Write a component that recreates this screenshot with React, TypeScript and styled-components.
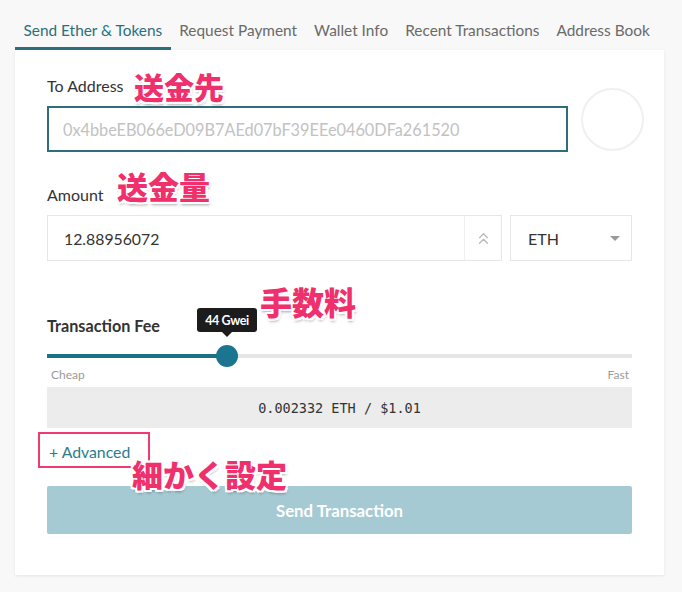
import styled, { createGlobalStyle } from "styled-components";
import { ChevronsUp } from "lucide-react";

const GlobalStyle = createGlobalStyle`
  html, body {
    margin: 0;
    padding: 0;
    background: #f8f8f8;
    font-family: Lato, "Open Sans", sans-serif;
  }
  * {
    box-sizing: border-box;
  }
`;

const tabs = [
  "Send Ether & Tokens",
  "Request Payment",
  "Wallet Info",
  "Recent Transactions",
  "Address Book",
];

const feePercent = 30.77;

function App() {
  return (
    <Page>
      <GlobalStyle />
      <TabBar>
        {tabs.map((t, i) => (
          <Tab key={t} $active={i === 0}>
            {t}
          </Tab>
        ))}
      </TabBar>
      <Card>
        <AddressRow>
          <AddressColumn>
            <Label>To Address</Label>
            <AddressInput placeholder="0x4bbeEB066eD09B7AEd07bF39EEe0460DFa261520" />
          </AddressColumn>
          <Identicon />
        </AddressRow>

        <Label $top={33}>Amount</Label>
        <AmountRow>
          <AmountBox>
            <AmountValue>12.88956072</AmountValue>
            <Spinner>
              <ChevronsUp size={19} strokeWidth={1.5} color="#b8b8b8" />
            </Spinner>
          </AmountBox>
          <SelectBox>
            ETH
            <Caret />
          </SelectBox>
        </AmountRow>

        <FeeLabel>Transaction Fee</FeeLabel>
        <Slider>
          <Track />
          <Fill style={{ width: `${feePercent}%` }} />
          <Knob style={{ left: `${feePercent}%` }}>
            <Tooltip>44 Gwei</Tooltip>
          </Knob>
        </Slider>
        <SliderLabels>
          <span>Cheap</span>
          <span>Fast</span>
        </SliderLabels>
        <FeeBox>0.002332 ETH / $1.01</FeeBox>

        <AdvancedLink>+ Advanced</AdvancedLink>
        <SendButton>Send Transaction</SendButton>

        <Highlight />
        <Note $left={119} $top={21} $size={30}>送金先</Note>
        <Note $left={102} $top={120} $size={31}>送金量</Note>
        <Note $left={245} $top={235} $size={32}>手数料</Note>
        <Note $left={117} $top={408} $size={31}>細かく設定</Note>
      </Card>
    </Page>
  );
}

const Page = styled.div`
  width: 682px;
  min-height: 592px;
  padding: 0 18px 17px 15px;
`;

const TabBar = styled.div`
  display: flex;
  align-items: flex-end;
  height: 50px;
`;

const Tab = styled.div<{ $active?: boolean }>`
  padding: 0 8.5px 7px;
  font-size: 15.4px;
  line-height: 20px;
  color: ${(p) => (p.$active ? "#2b707d" : "#6a6a6a")};
  border-bottom: 3px solid ${(p) => (p.$active ? "#2b707d" : "transparent")};
  white-space: nowrap;
`;

const Card = styled.div`
  position: relative;
  width: 649px;
  background: #fff;
  padding: 26px 32px 41px;
  box-shadow: 0 1px 3px rgba(0, 0, 0, 0.08);
`;

const AddressRow = styled.div`
  display: flex;
  align-items: flex-end;
  gap: 13px;
`;

const AddressColumn = styled.div`
  flex: 0 0 521px;
`;

const Label = styled.div<{ $top?: number }>`
  margin-top: ${(p) => p.$top ?? 0}px;
  margin-bottom: 10px;
  font-size: 16px;
  line-height: 20px;
  color: #333;
`;

const AddressInput = styled.input`
  display: block;
  width: 100%;
  height: 46px;
  padding: 0 14px;
  border: 2px solid #2e6d79;
  font-family: Lato, sans-serif;
  font-size: 16.3px;
  color: #333;
  outline: none;
  &::placeholder {
    color: #c2c2c2;
  }
`;

const Identicon = styled.div`
  flex: 0 0 63px;
  height: 63px;
  margin-bottom: 1px;
  border-radius: 50%;
  border: 2px solid #f0f0f0;
`;

const AmountRow = styled.div`
  display: flex;
  gap: 8px;
`;

const AmountBox = styled.div`
  display: flex;
  width: 455px;
  height: 46px;
  border: 1px solid #e6e6e6;
`;

const AmountValue = styled.div`
  flex: 1;
  display: flex;
  align-items: center;
  padding-left: 16px;
  font-size: 15.8px;
  color: #333;
`;

const Spinner = styled.div`
  width: 37px;
  display: flex;
  align-items: center;
  justify-content: center;
  border-left: 1px solid #f0f0f0;
`;

const SelectBox = styled.div`
  flex: 1;
  height: 46px;
  display: flex;
  align-items: center;
  justify-content: space-between;
  padding: 0 11px 0 17px;
  border: 1px solid #e6e6e6;
  font-size: 16px;
  color: #333;
`;

const Caret = styled.span`
  width: 0;
  height: 0;
  border-left: 5px solid transparent;
  border-right: 5px solid transparent;
  border-top: 5px solid #999;
`;

const FeeLabel = styled.div`
  margin-top: 55px;
  font-size: 16.2px;
  line-height: 20px;
  font-weight: 700;
  color: #333;
`;

const Slider = styled.div`
  position: relative;
  margin-top: 9px;
  height: 22px;
`;

const Track = styled.div`
  position: absolute;
  left: 0;
  right: 0;
  top: 9px;
  height: 4px;
  background: #e6e6e6;
`;

const Fill = styled.div`
  position: absolute;
  left: 0;
  top: 9px;
  height: 4px;
  background: #1b7287;
`;

const Knob = styled.div`
  position: absolute;
  top: 0;
  width: 22px;
  height: 22px;
  margin-left: -11px;
  border-radius: 50%;
  background: #1b7590;
`;

const Tooltip = styled.div`
  position: absolute;
  bottom: 35px;
  left: 50%;
  transform: translateX(-50%);
  width: 60px;
  height: 24px;
  display: flex;
  align-items: center;
  justify-content: center;
  background: #1c1c1c;
  border-radius: 3px;
  color: #fff;
  font-size: 12.5px;
  font-weight: 700;
  letter-spacing: -0.4px;
  white-space: nowrap;
  &::after {
    content: "";
    position: absolute;
    top: 100%;
    left: 50%;
    margin-left: -5px;
    border-left: 5px solid transparent;
    border-right: 5px solid transparent;
    border-top: 5px solid #1c1c1c;
  }
`;

const SliderLabels = styled.div`
  display: flex;
  justify-content: space-between;
  margin-top: 1px;
  padding: 0 3px 0 4px;
  font-size: 12px;
  line-height: 14px;
  color: #9a9a9a;
`;

const FeeBox = styled.div`
  margin-top: 5px;
  height: 41px;
  display: flex;
  align-items: center;
  justify-content: center;
  background: #ececec;
  font-family: "DejaVu Sans Mono", "Liberation Mono", monospace;
  font-size: 13.5px;
  color: #333;
`;

const AdvancedLink = styled.div`
  margin-top: 14px;
  margin-left: 2px;
  font-size: 15.8px;
  line-height: 20px;
  color: #2c7b8a;
`;

const SendButton = styled.div`
  margin-top: 24px;
  height: 48px;
  display: flex;
  align-items: center;
  justify-content: center;
  background: #a5cad4;
  border-radius: 2px;
  color: #fff;
  font-size: 16.8px;
  font-weight: 700;
`;

const Highlight = styled.div`
  position: absolute;
  left: 23px;
  top: 382px;
  width: 112px;
  height: 36px;
  border: 2px solid #ef3a72;
`;

const Note = styled.div<{ $left: number; $top: number; $size: number }>`
  position: absolute;
  left: ${(p) => p.$left}px;
  top: ${(p) => p.$top}px;
  font-family: "Noto Sans CJK JP", sans-serif;
  font-size: ${(p) => p.$size}px;
  font-weight: 900;
  line-height: 1;
  color: #f0306d;
  white-space: nowrap;
  text-shadow: -2px 0 #fff, 2px 0 #fff, 0 -2px #fff, 0 2px #fff,
    -2px -2px #fff, 2px 2px #fff, -2px 2px #fff, 2px -2px #fff,
    1px 3px 3px rgba(0, 0, 0, 0.35);
`;

export default App;
